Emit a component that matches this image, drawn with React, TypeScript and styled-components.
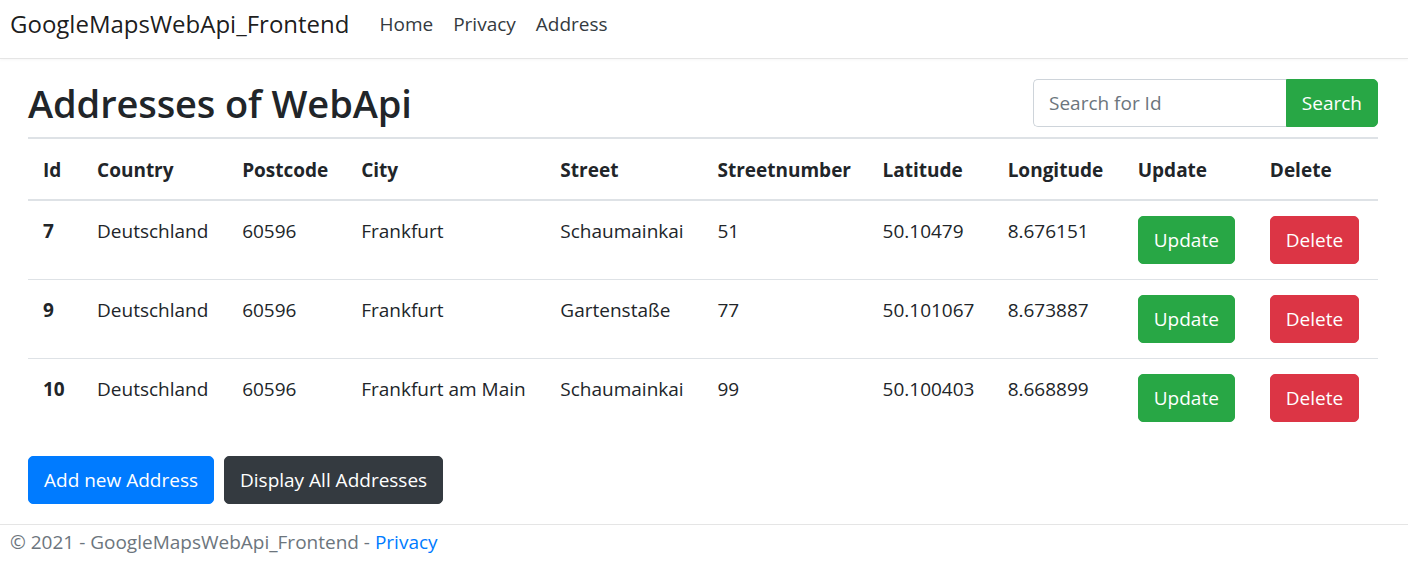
import styled, { createGlobalStyle } from "styled-components";

type Address = {
  id: number;
  country: string;
  postcode: string;
  city: string;
  street: string;
  number: string;
  lat: string;
  lng: string;
};

const addresses: Address[] = [
  { id: 7, country: "Deutschland", postcode: "60596", city: "Frankfurt", street: "Schaumainkai", number: "51", lat: "50.10479", lng: "8.676151" },
  { id: 9, country: "Deutschland", postcode: "60596", city: "Frankfurt", street: "Gartenstaße", number: "77", lat: "50.101067", lng: "8.673887" },
  { id: 10, country: "Deutschland", postcode: "60596", city: "Frankfurt am Main", street: "Schaumainkai", number: "99", lat: "50.100403", lng: "8.668899" },
];

const columns = [
  { label: "Id", width: 54 },
  { label: "Country", width: 145 },
  { label: "Postcode", width: 119 },
  { label: "City", width: 199 },
  { label: "Street", width: 157 },
  { label: "Streetnumber", width: 165 },
  { label: "Latitude", width: 125 },
  { label: "Longitude", width: 130 },
  { label: "Update", width: 132 },
  { label: "Delete", width: 123 },
];

const App = () => {
  return (
    <>
      <GlobalStyle />
      <Navbar>
        <Brand href="#">GoogleMapsWebApi_Frontend</Brand>
        <NavList>
          <NavLink href="#">Home</NavLink>
          <NavLink href="#">Privacy</NavLink>
          <NavLink href="#">Address</NavLink>
        </NavList>
      </Navbar>
      <Main>
        <TitleRow>
          <Title>Addresses of WebApi</Title>
          <SearchForm onSubmit={(e) => e.preventDefault()}>
            <SearchInput placeholder="Search for Id" />
            <Button variant="success" attached>
              Search
            </Button>
          </SearchForm>
        </TitleRow>
        <Table>
          <colgroup>
            {columns.map((c) => (
              <col key={c.label} style={{ width: c.width }} />
            ))}
          </colgroup>
          <thead>
            <tr>
              {columns.map((c) => (
                <HeadCell key={c.label}>{c.label}</HeadCell>
              ))}
            </tr>
          </thead>
          <tbody>
            {addresses.map((a) => (
              <tr key={a.id}>
                <RowHead>{a.id}</RowHead>
                <Cell>{a.country}</Cell>
                <Cell>{a.postcode}</Cell>
                <Cell>{a.city}</Cell>
                <Cell>{a.street}</Cell>
                <Cell>{a.number}</Cell>
                <Cell>{a.lat}</Cell>
                <Cell>{a.lng}</Cell>
                <Cell>
                  <Button variant="success">Update</Button>
                </Cell>
                <Cell>
                  <Button variant="danger">Delete</Button>
                </Cell>
              </tr>
            ))}
          </tbody>
        </Table>
        <ActionRow>
          <Button variant="primary">Add new Address</Button>
          <Button variant="dark">Display All Addresses</Button>
        </ActionRow>
      </Main>
      <Footer>
        © 2021 - GoogleMapsWebApi_Frontend - <FooterLink href="#">Privacy</FooterLink>
      </Footer>
    </>
  );
};

export default App;

const GlobalStyle = createGlobalStyle`
  html, body {
    margin: 0;
    background: #fff;
  }
  body {
    font-family: "Open Sans", "Noto Sans", Arial, sans-serif;
    font-size: 19px;
    line-height: 30px;
    color: #212529;
  }
  * {
    box-sizing: border-box;
  }
`;

const Navbar = styled.nav`
  height: 59px;
  display: flex;
  align-items: center;
  padding: 0 10px 10px;
  border-bottom: 1px solid #e5e5e5;
  box-shadow: 0 1px 3px rgba(0, 0, 0, 0.04);
`;

const Brand = styled.a`
  font-size: 24px;
  line-height: 34px;
  color: rgba(0, 0, 0, 0.9);
  text-decoration: none;
  margin-right: 20px;
`;

const NavList = styled.div`
  display: flex;
`;

const NavLink = styled.a`
  color: #343a40;
  text-decoration: none;
  padding: 0 10px;
`;

const Main = styled.main`
  padding: 14px 30px 0 28px;
`;

const TitleRow = styled.div`
  display: flex;
  align-items: center;
  justify-content: space-between;
  height: 61px;
  padding-bottom: 2px;
`;

const Title = styled.h1`
  margin: 0;
  font-size: 38px;
  font-weight: 600;
  line-height: 50px;
  letter-spacing: -0.1px;
`;

const SearchForm = styled.form`
  display: flex;
  width: 345px;
`;

const SearchInput = styled.input`
  flex: 1;
  min-width: 0;
  height: 48px;
  padding: 0 15px;
  font: inherit;
  color: #495057;
  border: 1px solid #ced4da;
  border-right: none;
  border-radius: 5px 0 0 5px;
  outline: none;
  &::placeholder {
    color: #6c757d;
  }
`;

const variants = {
  success: "#28a745",
  danger: "#dc3545",
  primary: "#007bff",
  dark: "#343a40",
};

const Button = styled.button<{ variant: keyof typeof variants; attached?: boolean }>`
  height: 48px;
  padding: 0 15px;
  font: inherit;
  color: #fff;
  background: ${(p) => variants[p.variant]};
  border: 1px solid ${(p) => variants[p.variant]};
  border-radius: ${(p) => (p.attached ? "0 5px 5px 0" : "5px")};
  cursor: pointer;
  white-space: nowrap;
`;

const Table = styled.table`
  width: 1350px;
  table-layout: fixed;
  border-collapse: collapse;
  margin: 3px 0 19px;
`;

const HeadCell = styled.th`
  text-align: left;
  font-weight: 700;
  padding: 16px 15px 14px;
  border-top: 2px solid #dee2e6;
  border-bottom: 2px solid #dee2e6;
  white-space: nowrap;
`;

const Cell = styled.td`
  vertical-align: top;
  padding: 15px 15px 15px;
  border-top: 1px solid #dee2e6;
  white-space: nowrap;
`;

const RowHead = styled(Cell).attrs({ as: "th" })`
  text-align: left;
  font-weight: 700;
`;

const ActionRow = styled.div`
  display: flex;
  gap: 10px;
  padding-bottom: 20px;
`;

const Footer = styled.footer`
  border-top: 1px solid #e5e5e5;
  padding: 0 10px;
  line-height: 34px;
  color: #6c757d;
  white-space: nowrap;
`;

const FooterLink = styled.a`
  color: #007bff;
  text-decoration: none;
`;
